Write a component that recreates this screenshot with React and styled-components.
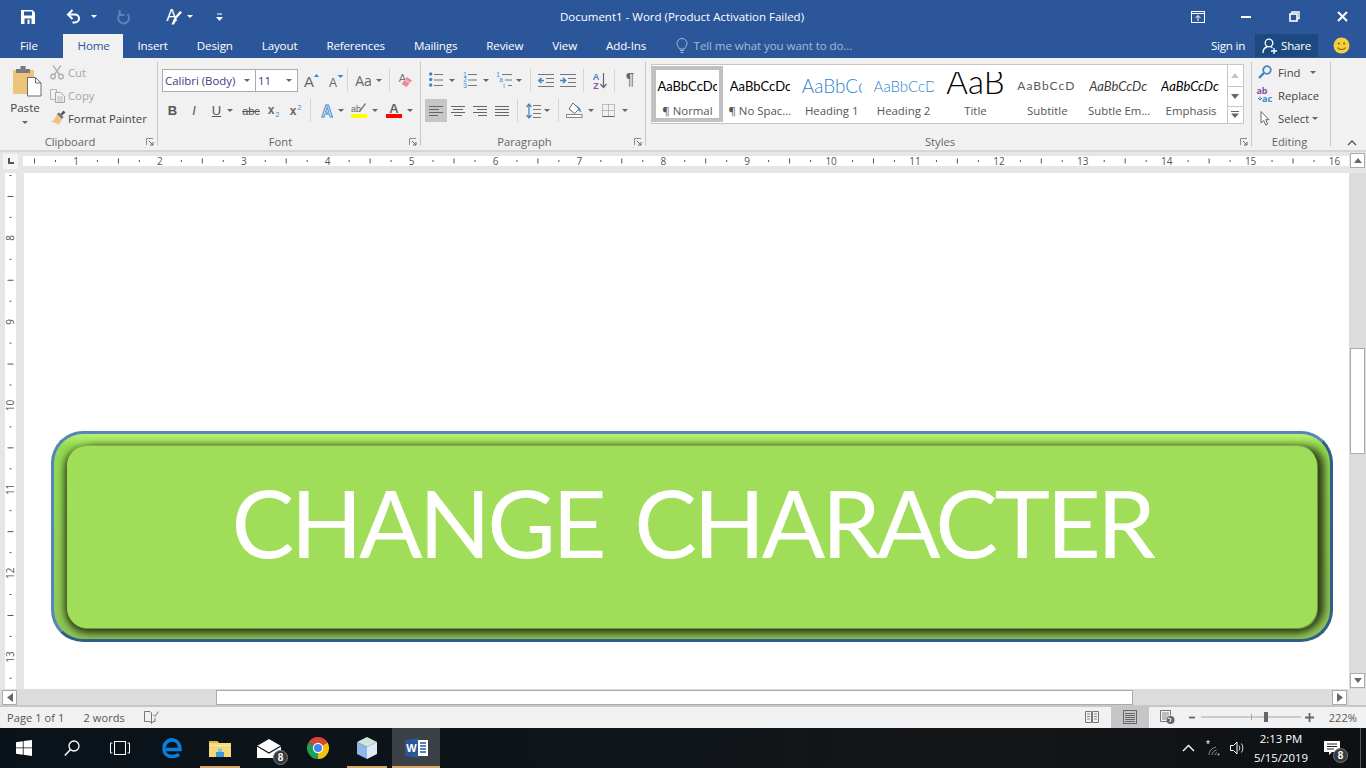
import React from "react";
import styled, { createGlobalStyle } from "styled-components";

const BLUE = "#2b579a";
const ICON = "#666";
const ACCENT = "#3f86c7";

const Global = createGlobalStyle`
  html, body { margin: 0; padding: 0; background: #fff; }
  body { font-family: "Open Sans", "Noto Sans", sans-serif; font-size: 11.5px; color: #444; }
`;

const Win = styled.div`
  width: 1366px;
  height: 768px;
  overflow: hidden;
  display: flex;
  flex-direction: column;
`;

/* title bar + tabs */
const TitleBar = styled.div`
  height: 34px;
  background: ${BLUE};
  color: #fff;
  display: grid;
  grid-template-columns: 1fr auto 1fr;
  align-items: center;
`;
const Quick = styled.div`display: flex; align-items: center; height: 100%;`;
const WinBtns = styled.div`display: flex; justify-content: flex-end; align-items: center; height: 100%;`;
const DocTitle = styled.div`font-size: 11.5px; color: #fff; margin-left: -2px;`;

const TabRow = styled.div`
  height: 24px;
  background: ${BLUE};
  display: flex;
  align-items: stretch;
  font-size: 11.6px;
  letter-spacing: -0.15px;
`;
const FileTab = styled.div`
  width: 63px;
  padding-left: 20px;
  box-sizing: border-box;
  color: #fff;
  line-height: 24px;
`;
const Tab = styled.div`
  padding: 0 14.5px;
  width: ${(p) => (p.$active ? "60px" : "auto")};
  box-sizing: border-box;
  text-align: center;
  line-height: 23px;
  color: ${(p) => (p.$active ? BLUE : "#fff")};
  background: ${(p) => (p.$active ? "#f1f1f1" : "transparent")};
`;
const TellMe = styled.div`
  margin-left: 15px;
  display: flex;
  align-items: center;
  gap: 6px;
  color: #a5b9d6;
  letter-spacing: -0.1px;
`;
const TabRight = styled.div`
  margin-left: auto;
  display: flex;
  align-items: center;
  color: #fff;
  letter-spacing: -0.25px;
`;
const ShareBtn = styled.div`
  width: 63px;
  height: 23px;
  margin: 0 15px 0 10px;
  background: #1c4a80;
  display: flex;
  align-items: center;
  justify-content: center;
  gap: 3px;
`;
const SmileySlot = styled.div`width: 18px; margin-right: 15px;`;

/* ribbon */
const Ribbon = styled.div`
  height: 88px;
  background: #f1f1f1;
  border-bottom: 2px solid #d6d6d6;
  padding-top: 4px;
  display: flex;
`;
const Group = styled.div`
  width: ${(p) => p.$w}px;
  height: 88px;
  display: flex;
  flex-direction: column;
  background: linear-gradient(#c6c6c6, #c6c6c6) right top / 1px 84px no-repeat;
`;
const GroupBody = styled.div`
  height: 72px;
  display: ${(p) => (p.$row ? "flex" : "block")};
`;
const GroupLabel = styled.div`
  height: 16px;
  display: flex;
  align-items: center;
  color: #666;
  font-size: 11.2px;
  line-height: 16px;
  padding-right: 4px;
  & > span { flex: 1; text-align: center; }
  & > svg { margin-left: 6px; }
`;
const Paste = styled.div`
  width: 50px;
  display: flex;
  flex-direction: column;
  align-items: center;
  padding-top: 4px;
  font-size: 11.6px;
  color: #444;
  & > svg:first-child { margin-left: 4px; }
`;
const PasteText = styled.div`margin-top: 2px; line-height: 18px; margin-bottom: 4px;`;
const Stack = styled.div`display: flex; flex-direction: column; margin-top: -1px;`;
const StackRow = styled.div`
  height: 23px;
  display: flex;
  align-items: center;
  color: ${(p) => (p.$off ? "#a6a6a6" : "#444")};
  font-size: 11.3px;
`;
const StackIcon = styled.div`
  width: ${(p) => p.$w || 18}px;
  display: flex;
  justify-content: ${(p) => (p.$w ? "center" : "flex-start")};
`;
const Rows = styled.div`
  padding-top: 7px;
  display: flex;
  flex-direction: column;
  gap: 7px;
`;
const Row = styled.div`
  height: ${(p) => p.$h || 23}px;
  display: flex;
  align-items: center;
  margin-left: ${(p) => p.$ml || 0}px;
`;
const Tool = styled.div`
  width: ${(p) => p.$w}px;
  height: 23px;
  flex: none;
  display: flex;
  align-items: center;
  justify-content: center;
  gap: ${(p) => p.$gap ?? 4}px;
  background: ${(p) => (p.$on ? "#c6c6c6" : "transparent")};
  margin-left: ${(p) => p.$ml || 0}px;
  color: ${ICON};
`;
const Sep = styled.div`
  width: 1px;
  height: 23px;
  flex: none;
  background: #d4d4d4;
  margin-left: ${(p) => p.$ml || 0}px;
  margin-right: ${(p) => p.$mr || 0}px;
`;
const Caret = styled.span`
  flex: none;
  width: 0;
  height: 0;
  border-left: 3.5px solid transparent;
  border-right: 3.5px solid transparent;
  border-top: 4px solid ${(p) => p.$c || "#666"};
`;
const SmallCaret = styled(Caret)`
  border-left-width: 3px;
  border-right-width: 3px;
  border-top-width: 3px;
  margin-left: ${(p) => p.$ml || 0}px;
`;
const Select = styled.div`
  width: ${(p) => p.$w}px;
  height: 23px;
  box-sizing: border-box;
  flex: none;
  background: #fff;
  border: 1px solid #ababab;
  margin-left: ${(p) => p.$ml || 0}px;
  padding: 0 5px 0 2px;
  display: flex;
  align-items: center;
  justify-content: space-between;
  font-size: 11.4px;
  color: #3b3b78;
`;
const Glyph = styled.span`
  font-family: ${(p) => p.$f || '"Liberation Sans"'}, sans-serif;
  font-size: ${(p) => p.$s || 13}px;
  font-weight: ${(p) => (p.$b ? 700 : 400)};
  font-style: ${(p) => (p.$i ? "italic" : "normal")};
  text-decoration: ${(p) => p.$d || "none"};
  color: ${(p) => p.$c || "#555"};
`;

/* style gallery */
const Gallery = styled.div`
  margin: 2px 0 0 5px;
  width: 593px;
  height: 60px;
  box-sizing: border-box;
  border: 1px solid #c6c6c6;
  background: #fff;
  display: flex;
  padding-top: 1px;
`;
const StyleCard = styled.div`
  height: 56px;
  box-sizing: border-box;
  border: 4px solid ${(p) => (p.$on ? "#c0c0c0" : "transparent")};
  margin-right: ${(p) => (p.$on ? "1px" : "0")};
  width: ${(p) => (p.$on ? "71px" : "72px")};
  display: flex;
  flex-direction: column;
  align-items: center;
`;
const Sample = styled.div`
  flex: none;
  width: 60px;
  height: ${(p) => 32 - (p.$top || 0)}px;
  margin-top: ${(p) => p.$top || 0}px;
  overflow: hidden;
  white-space: nowrap;
  font-family: Lato, "Open Sans", sans-serif;
  line-height: ${(p) => p.$lh || 32}px;
  font-size: ${(p) => p.$s || 13}px;
  color: ${(p) => p.$c || "#000"};
  font-style: ${(p) => (p.$i ? "italic" : "normal")};
  font-weight: ${(p) => p.$wt || 400};
  letter-spacing: ${(p) => p.$ls || 0}px;
  text-align: ${(p) => (p.$center ? "center" : "left")};
`;
const StyleName = styled.div`
  flex: none;
  font-size: 11.4px;
  line-height: 18px;
  color: #555;
  white-space: nowrap;
`;
const GalleryScroll = styled.div`
  width: 15px;
  margin: -1px 0 0 0;
  border-left: 1px solid #c6c6c6;
  display: grid;
  grid-template-rows: 21px 20px 17px;
`;
const GalleryBtn = styled.div`
  display: flex;
  flex-direction: column;
  gap: 2px;
  align-items: center;
  justify-content: center;
  border-top: ${(p) => (p.$line ? "1px solid #c6c6c6" : "none")};
`;
const Collapse = styled.div`
  flex: 1;
  display: flex;
  align-items: flex-end;
  justify-content: flex-end;
  padding: 0 9px 4px 0;
`;

/* ruler */
const RulerRow = styled.div`
  height: 21px;
  background: #e6e6e6;
  display: flex;
`;
const Corner = styled.div`
  width: 15px;
  height: 15px;
  margin: 2px 5px 0 3px;
  background: #f4f4f4;
  display: flex;
  align-items: center;
  justify-content: center;
`;
const RulerStrip = styled.div`
  width: 1326px;
  height: 10px;
  margin-top: 4px;
  background: #fff;
`;
const ArrowBtn = styled.div`
  width: ${(p) => p.$w || 15}px;
  height: ${(p) => p.$h || 15}px;
  box-sizing: border-box;
  flex: none;
  background: #fff;
  border: 1px solid #ababab;
  display: flex;
  align-items: center;
  justify-content: center;
`;
const TopArrow = styled(ArrowBtn)`margin: 1px 0 0 1px;`;

/* document */
const DocRow = styled.div`
  height: 516px;
  display: flex;
  background: #e6e6e6;
`;
const VRuler = styled.div`
  width: 24px;
  flex: none;
  box-sizing: border-box;
  padding-left: 5px;
`;
const VStrip = styled.div`width: 11px; height: 100%; background: #fff;`;
const Page = styled.div`
  width: 1325px;
  flex: none;
  background: #fff;
  box-sizing: border-box;
  padding: 258px 0 0 27px;
  overflow: hidden;
`;
const Bevel = styled.div`
  width: 1282px;
  height: 211px;
  box-sizing: border-box;
  border: 3px solid #5585bb;
  border-bottom-color: #2f5f88;
  border-right-color: #2f5f88;
  border-radius: 32px;
  padding: 12px 13px 11px 13px;
  background: linear-gradient(#bcf070 0, #93da53 12px, #8fc558 100%);
  overflow: hidden;
`;
const Face = styled.div`
  height: 100%;
  box-sizing: border-box;
  background: #a0de5a;
  border-radius: 20px;
  display: flex;
  align-items: center;
  justify-content: center;
  padding-bottom: 30px;
  box-shadow:
    0 -1px 0 #80b050,
    1px 1px 0 #6e9344,
    8px 0 8px -1px #2e3a14,
    0 6px 8px -1px #2e3a14,
    -5px 0 6px -2px #4f7028;
  color: #fff;
  font-family: Lato, "Open Sans", sans-serif;
  font-size: 94px;
  letter-spacing: -3.6px;
  word-spacing: 11px;
  white-space: nowrap;
`;
const VScroll = styled.div`
  flex: 1;
  background: #dcdcdc;
  display: flex;
  flex-direction: column;
  padding: 0 1px 1px 1px;
`;
const VThumb = styled.div`
  margin-top: 175px;
  width: 15px;
  height: 106px;
  box-sizing: border-box;
  background: #fff;
  border: 1px solid #ababab;
`;
const DownArrow = styled(ArrowBtn)`margin-top: auto;`;

const HScroll = styled.div`
  height: 18px;
  box-sizing: border-box;
  background: #dcdcdc;
  border-bottom: 2px solid #c6c6c6;
  display: flex;
  padding: 1px 0 0 2px;
`;
const HThumb = styled.div`
  width: 917px;
  height: 15px;
  margin-left: 199px;
  box-sizing: border-box;
  background: #fff;
  border: 1px solid #ababab;
`;
const HRight = styled(ArrowBtn)`margin-left: 199px;`;
const HEnd = styled.div`
  margin: -1px 0 0 2px;
  flex: 1;
  background: #e6e6e6;
`;

/* status bar */
const StatusBar = styled.div`
  height: 22px;
  background: #f1f1f1;
  display: flex;
  align-items: center;
  font-size: 11px;
  color: #555;
  letter-spacing: 0.1px;
`;
const StatusText = styled.span`margin-left: ${(p) => p.$ml}px;`;
const StatusRight = styled.div`
  margin-left: auto;
  display: flex;
  align-items: center;
  height: 100%;
`;
const ViewBtn = styled.div`
  width: ${(p) => p.$w}px;
  height: 100%;
  background: ${(p) => (p.$on ? "#c6c6c6" : "transparent")};
  display: flex;
  align-items: center;
  justify-content: center;
`;
const Zoomer = styled.div`
  display: flex;
  align-items: center;
  width: 126px;
  margin-left: 1px;
  color: #555;
  justify-content: space-between;
`;
const Percent = styled.span`margin: 0 9px 0 15px;`;

/* taskbar */
const Taskbar = styled.div`
  height: 40px;
  background: linear-gradient(90deg, #0a1319, #0c141a 30%, #141618 70%, #0e1114);
  display: flex;
  color: #fff;
`;
const TaskCell = styled.div`
  position: relative;
  width: ${(p) => p.$w || 48}px;
  margin-left: ${(p) => p.$ml || 0}px;
  flex: none;
  display: flex;
  align-items: center;
  justify-content: center;
  background:
    ${(p) => (p.$open ? `linear-gradient(#d9a566, #d9a566) center bottom / ${p.$active ? "100%" : "40px"} 2px no-repeat` : "none")},
    ${(p) => (p.$active ? "#3b4045" : "transparent")};
`;
const Badge = styled.span`
  position: absolute;
  right: ${(p) => p.$r}px;
  bottom: ${(p) => p.$b}px;
  width: 15px;
  height: 15px;
  box-sizing: border-box;
  border-radius: 50%;
  background: #3a3a3a;
  border: 1px solid #777;
  color: #fff;
  font-family: "Liberation Sans", sans-serif;
  font-size: 10px;
  font-weight: 700;
  line-height: 13px;
  text-align: center;
`;
const Tray = styled.div`
  margin-left: auto;
  display: flex;
  height: 100%;
`;
const Clock = styled.div`
  width: 60px;
  flex: none;
  display: flex;
  flex-direction: column;
  align-items: center;
  justify-content: center;
  gap: 1px;
  font-size: 11.4px;
  line-height: 18px;
  white-space: nowrap;
`;
const ShowDesktop = styled.div`
  width: 5px;
  margin-left: 7px;
  border-left: 1px solid #555;
`;

/* icons */
const Svg = ({ w, h = w, children }) => (
  <svg width={w} height={h} viewBox={`0 0 ${w} ${h}`} style={{ display: "block", flex: "none", overflow: "visible" }}>{children}</svg>
);
const T = ({ x, y, s = 13, c = "#666", w = 400, i, f = "Liberation Sans", a = "middle", children }) => (
  <text x={x} y={y} fontFamily={f} fontSize={s} fill={c} fontWeight={w} fontStyle={i ? "italic" : "normal"} textAnchor={a}>{children}</text>
);

const SaveIcon = () => (
  <Svg w={14}>
    <path d="M0 0h11.5L14 2.5V14H0z" fill="#fff" />
    <rect x="3" y="1.5" width="8" height="4" fill={BLUE} />
    <rect x="3.5" y="8.5" width="7" height="5.5" fill={BLUE} />
    <rect x="6.5" y="9.5" width="2" height="4.5" fill="#fff" />
  </Svg>
);
const UndoIcon = () => (
  <Svg w={15}>
    <path d="M2.5 5.5h6.5a4 4 0 0 1 0 8H6.5" fill="none" stroke="#fff" strokeWidth="2" />
    <path d="M6.5 1L2 5.5L6.5 10" fill="none" stroke="#fff" strokeWidth="2" />
  </Svg>
);
const RedoIcon = () => (
  <Svg w={14}>
    <path d="M10.5 3.5A5.5 5.5 0 1 1 4 2.6" fill="none" stroke="#5f82b8" strokeWidth="2" transform="translate(0 .5)" />
    <path d="M3.5 0v5h5" fill="none" stroke="#5f82b8" strokeWidth="2" transform="translate(-1 0)" />
  </Svg>
);
const StyleSetIcon = () => (
  <Svg w={18} h={17}>
    <T x={6.5} y={13} s={16} c="#fff">A</T>
    <path d="M17 4.5L11 11l-2-1 6-7z" fill="#fff" />
    <path d="M9 10.5l2.5 1.5L9 16.5H6.5z" fill="#fff" />
  </Svg>
);
const CustomizeIcon = () => (
  <Svg w={7} h={8}>
    <path d="M1 .5h5v1H1z" fill="#fff" />
    <path d="M0 4h7L3.5 8z" fill="#fff" />
  </Svg>
);
const RibbonDisplay = () => (
  <Svg w={14} h={12}>
    <rect x=".5" y=".5" width="13" height="11" fill="none" stroke="#fff" />
    <path d="M1 2.5h12" stroke="#fff" />
    <path d="M7 10V4.5M4.5 7L7 4.5 9.5 7" fill="none" stroke="#fff" />
  </Svg>
);
const MinIcon = () => <Svg w={10} h={10}><rect y="4" width="10" height="2" fill="#fff" /></Svg>;
const RestoreIcon = () => (
  <Svg w={11} h={11}>
    <path d="M3 2.5V1h7v6.5H8" fill="none" stroke="#fff" strokeWidth="1.4" />
    <rect x="1" y="3" width="7" height="7" fill="none" stroke="#fff" strokeWidth="1.6" />
  </Svg>
);
const CloseIcon = () => (
  <Svg w={11}><path d="M1 1l9 9M10 1l-9 9" stroke="#fff" strokeWidth="2" /></Svg>
);
const BulbIcon = () => (
  <Svg w={12} h={16}>
    <path d="M3.5 11C3 9 1 8 1 5.5a5 5 0 0 1 10 0C11 8 9 9 8.5 11z" fill="none" stroke="#a5b9d6" />
    <path d="M4 12.5h4M4.5 14.5h3" stroke="#a5b9d6" />
  </Svg>
);
const ShareIcon = () => (
  <Svg w={16}>
    <circle cx="7" cy="5" r="3.8" fill="none" stroke="#fff" strokeWidth="1.3" />
    <path d="M1 15c0-3.5 2-5.5 4-6M9 9l1.5 1" fill="none" stroke="#fff" strokeWidth="1.3" />
    <path d="M12 10v6M9 13h6" stroke="#fff" strokeWidth="1.3" />
  </Svg>
);
const Smiley = () => (
  <Svg w={17}>
    <circle cx="8.5" cy="8.5" r="8" fill="#f4d03f" />
    <circle cx="5.8" cy="6.5" r="1.1" fill="#7a6410" />
    <circle cx="11.2" cy="6.5" r="1.1" fill="#7a6410" />
    <path d="M4.5 10.5c1.5 2.7 6.5 2.7 8 0" fill="none" stroke="#7a6410" strokeWidth="1.1" />
  </Svg>
);
const PasteIcon = () => (
  <Svg w={29} h={31}>
    <rect x="0" y="4" width="21" height="24" fill="#edc47c" />
    <rect x="3" y="3" width="14" height="4" fill="#7b7b7b" />
    <rect x="7.5" y="0" width="5" height="4" fill="#7b7b7b" />
    <path d="M14.5 11.5h8l5.5 5.5v13H14.5z" fill="#fff" stroke="#6c6c6c" />
    <path d="M22.5 11.5v5.5H28" fill="none" stroke="#6c6c6c" />
  </Svg>
);
const CutIcon = () => (
  <Svg w={14}>
    <path d="M3 .5l6.5 9M11 .5L4.5 9.5" stroke="#b0b0b0" strokeWidth="1.3" fill="none" />
    <circle cx="3" cy="11.5" r="2.3" fill="none" stroke="#a6a6a6" strokeWidth="1.2" />
    <circle cx="11" cy="11.5" r="2.3" fill="none" stroke="#a6a6a6" strokeWidth="1.2" />
  </Svg>
);
const CopyIcon = () => (
  <Svg w={15}>
    <path d="M.5 1.5h6v10h-6z" fill="#f1f1f1" stroke="#b4b4b4" />
    <path d="M5.5 4.5h5l4 3.5v6.5h-9z" fill="#f1f1f1" stroke="#a6a6a6" />
    <path d="M7 9h6M7 11h6M7 13h6" stroke="#bcbcbc" />
  </Svg>
);
const PainterIcon = () => (
  <Svg w={16}>
    <path d="M7 4l5 5-3 5.5L1 11.5C3 11 5 9 7 4z" fill="#eec383" />
    <path d="M7 4l2-1.5 4.5 4.5L12 9z" fill="#6e6e6e" />
    <path d="M10.5 4l3-3.5 2 2-3.5 3z" fill="#555" />
  </Svg>
);
const Launcher = () => (
  <Svg w={8}>
    <path d="M.5 7V.5H7" fill="none" stroke="#8d8d8d" />
    <path d="M3 3l4 4M7 4v3H4" fill="none" stroke="#666" />
  </Svg>
);
const GrowIcon = ({ down }) => (
  <Svg w={16} h={16}>
    <T x={6} y={15} s={down ? 12 : 15} c="#666">A</T>
    <path d={down ? "M10.5 3h6l-3 3z" : "M11 5h5l-2.5-3z"} fill={ACCENT} />
  </Svg>
);
const Eraser = () => (
  <Svg w={16}>
    <T x={5.5} y={10} s={11} c="#777">A</T>
    <path d="M10 5l5 3.5-5.5 6.5-5-3z" fill="#ea8a9b" />
    <path d="M8 8l5 3" stroke="#fff" strokeWidth=".7" />
  </Svg>
);
const ListIcon = ({ w = 14, kind = "bullet" }) => {
  const ys = [2, 7.5, 13];
  return (
    <Svg w={w} h={16}>
      {ys.map((y, i) => (
        <g key={y}>
          {kind === "bullet" && <circle cx="1.7" cy={y} r="1.7" fill={ACCENT} />}
          {kind === "num" && <T x={2} y={y + 2.5} s={6.5} c={ACCENT}>{i + 1}</T>}
          {kind === "multi" && <T x={2 + i * 3} y={y + 2.5} s={6.5} c={ACCENT}>{["1", "a", "i"][i]}</T>}
          <path d={`M${kind === "multi" ? 6 + i * 3 : 5} ${y + 0.5}H${w}`} stroke="#777" />
        </g>
      ))}
    </Svg>
  );
};
const IndentIcon = ({ out }) => (
  <Svg w={16} h={15}>
    <path d="M0 1.5h16M8 5.5h8M8 9.5h8M0 13.5h16" stroke="#777" />
    <path d={out ? "M6 7.5H1M3.5 5L1 7.5 3.5 10" : "M0 7.5h5M3 5l2.5 2.5L3 10"} fill="none" stroke={ACCENT} strokeWidth="1.7" />
  </Svg>
);
const SortIcon = () => (
  <Svg w={15} h={17}>
    <T x={4} y={8} s={9} c={ACCENT} w={700}>A</T>
    <T x={4} y={17} s={9} c="#8a4fb0" w={700}>Z</T>
    <path d="M11.5 1v14M8.5 12l3 3.5 3-3.5" fill="none" stroke="#666" strokeWidth="1.2" />
  </Svg>
);
const AlignIcon = ({ kind }) => {
  const lines = {
    left: [[0, 14], [0, 10], [0, 14], [0, 9]],
    center: [[0, 14], [2, 12], [0, 14], [3, 11]],
    right: [[0, 14], [4, 14], [0, 14], [5, 14]],
    justify: [[0, 14], [0, 14], [0, 14], [0, 14]],
  }[kind];
  return (
    <Svg w={14} h={12}>
      {lines.map(([a, b], i) => <path key={i} d={`M${a} ${1.5 + i * 3}H${b}`} stroke="#666" />)}
    </Svg>
  );
};
const SpacingIcon = () => (
  <Svg w={15} h={16}>
    <path d="M3 1v14M.5 4L3 1l2.5 3M.5 12L3 15l2.5-3" fill="none" stroke={ACCENT} strokeWidth="1.3" />
    <path d="M7 2.5h8M7 6.5h8M7 10.5h8M7 14.5h8" stroke="#777" />
  </Svg>
);
const ShadingIcon = () => (
  <Svg w={17}>
    <path d="M7 1l6 6-4.5 4.5L3 7z" fill="#fff" stroke="#666" />
    <path d="M10 3l4 3.5 1.5 4-3-2z" fill={ACCENT} />
    <rect x=".5" y="12.5" width="15.5" height="3" fill="#fff" stroke="#888" />
  </Svg>
);
const BorderIcon = () => (
  <Svg w={13}>
    <path d="M.5.5h12v12H.5zM6.5.5v12M.5 6.5h12" fill="none" stroke="#8a8a8a" strokeDasharray="1 1" />
    <path d="M.5 12.5h12" stroke="#666" />
  </Svg>
);
const FindIcon = () => (
  <Svg w={14}>
    <circle cx="9" cy="5" r="3.8" fill="none" stroke={ACCENT} strokeWidth="1.8" />
    <path d="M6 8l-5 5" stroke={ACCENT} strokeWidth="2.4" />
  </Svg>
);
const ReplaceIcon = () => (
  <Svg w={16} h={16}>
    <T x={5} y={7} s={9} c="#8a4fb0" w={700} f="Open Sans">ab</T>
    <T x={10} y={15} s={9} c={ACCENT} w={700} f="Open Sans">ac</T>
    <path d="M3 9.5v3M1 11l2 2 2-2" fill="none" stroke={ACCENT} />
  </Svg>
);
const SelectIcon = () => (
  <Svg w={10} h={15}>
    <path d="M1 .5V12l2.7-2.5 2 4.5 2-1-2-4.3H9z" fill="#fff" stroke="#666" />
  </Svg>
);
const Tri = ({ dir = "up", c = "#666" }) => {
  const d = { up: "M0 5L4 0l4 5z", down: "M0 0l4 5 4-5z" }[dir];
  return <Svg w={8} h={5}><path d={d} fill={c} /></Svg>;
};
const SideTri = ({ left }) => (
  <Svg w={6} h={9}><path d={left ? "M6 0L0 4.5 6 9z" : "M0 0l6 4.5L0 9z"} fill="#666" /></Svg>
);
const Chevron = () => (
  <Svg w={10} h={6}><path d="M1 5l4-4 4 4" fill="none" stroke="#555" strokeWidth="1.4" /></Svg>
);
const CornerMark = () => (
  <Svg w={6}><path d="M0 0h2v4h4v2H0z" fill="#555" /></Svg>
);

const hMarks = [];
for (let i = 0; i < 64; i++) hMarks.push(11 + i * 20.975);
const HRulerMarks = () => (
  <Svg w={1326} h={10}>
    {hMarks.map((x, i) => {
      if (i % 4 === 2) return null;
      if (i % 2 === 1) return <rect key={i} x={x} y="4" width="1" height="2" fill="#555" />;
      return <rect key={i} x={x} y="2.5" width="1" height="5" fill="#555" />;
    })}
    {Array.from({ length: 16 }, (_, k) => (
      <T key={k} x={53 + k * 83.9} y={9} s={10} c="#555" f="Open Sans">{k + 1}</T>
    ))}
  </Svg>
);
const VRulerMarks = () => (
  <Svg w={11} h={516}>
    {Array.from({ length: 25 }, (_, i) => {
      const y = 2 + i * 20.95;
      if (i % 4 === 3) return null;
      if (i % 2 === 1) return <rect key={i} x="2.5" y={y} width="6" height="1" fill="#555" />;
      return <rect key={i} x="4.5" y={y} width="2" height="1" fill="#555" />;
    })}
    {[8, 9, 10, 11, 12, 13].map((n, k) => (
      <g key={n} transform={`translate(9 ${65 + k * 83.8}) rotate(-90)`}>
        <T x={0} y={0} s={10} c="#555" f="Open Sans">{n}</T>
      </g>
    ))}
  </Svg>
);

const BookIcon = () => (
  <Svg w={14} h={14}>
    <path d="M.5 1.5h6v11h-6zM7.5 1.5h6v11h-6z" fill="none" stroke="#777" />
    <path d="M2 4h3M2 6.5h3M2 9h3M9 4h3M9 6.5h3M9 9h3" stroke="#888" />
  </Svg>
);
const ProofIcon = () => (
  <Svg w={15} h={15}>
    <path d="M7.5 3L6 1.5H.5v10H6l1.5 2 1.5-2h2V8M7.5 3v10" fill="none" stroke="#777" />
    <path d="M9 4.5l2 2 3.5-5" fill="none" stroke="#777" />
  </Svg>
);
const PrintIcon = () => (
  <Svg w={14} h={14}>
    <rect x=".5" y=".5" width="13" height="13" fill="none" stroke="#666" />
    <path d="M2 3.5h10M2 5.5h10M2 7.5h10M2 9.5h10M2 11.5h10" stroke="#666" />
  </Svg>
);
const WebIcon = () => (
  <Svg w={15} h={14}>
    <path d="M8 11.5H.5V.5h10v5" fill="none" stroke="#777" />
    <path d="M2 3h7M2 5h7M2 7h5M2 9h4" stroke="#888" />
    <circle cx="10.5" cy="10" r="4" fill="#666" />
    <path d="M8 8l3 1-1 3" stroke="#fff" fill="none" />
  </Svg>
);
const SliderIcon = () => (
  <Svg w={100} h={12}>
    <path d="M0 6h100" stroke="#a6a6a6" />
    <path d="M50.5 3v6" stroke="#a6a6a6" />
    <rect x="63" y="1" width="4" height="10" fill="#666" />
  </Svg>
);
const ZoomSign = ({ plus }) => (
  <Svg w={9} h={9}>
    <path d={plus ? "M0 4.5h9M4.5 0v9" : "M1 4.5h6"} stroke="#666" strokeWidth="1.8" />
  </Svg>
);

const WinLogo = () => (
  <Svg w={16}>
    <path d="M0 2.2L6.8 1.2V7.5H0zM7.6 1.1L16 0v7.5H7.6zM0 8.3h6.800v6.500L0 13.800zM7.6 8.3H16V16l-8.400-1.200z" fill="#fff" />
  </Svg>
);
const SearchIcon = () => (
  <Svg w={16}>
    <circle cx="10" cy="6" r="5" fill="none" stroke="#fff" strokeWidth="1.3" />
    <path d="M6.5 9.5L.8 15.5" stroke="#fff" strokeWidth="1.5" />
  </Svg>
);
const TaskViewIcon = () => (
  <Svg w={20} h={14}>
    <rect x="4.5" y=".5" width="11" height="13" fill="none" stroke="#fff" />
    <path d="M2.5 2H.5v10h2M17.5 2h2v10h-2" fill="none" stroke="#fff" />
  </Svg>
);
const EdgeLogo = () => (
  <Svg w={20}>
    <path d="M4 11.5h14C18 5.5 14.5 2 10 2 5.5 2 2 6 2 11c0 4.5 3.500 7.500 8 7.500 2.500 0 5-.7 7-2" fill="none" stroke="#0a7fdc" strokeWidth="3.5" />
    <path d="M1 8C3 3 7 1 11 1" fill="none" stroke="#0a7fdc" strokeWidth="2" />
  </Svg>
);
const ExplorerIcon = () => (
  <Svg w={22} h={18}>
    <path d="M0 2h8l2 2h12v14H0z" fill="#f5d77c" />
    <path d="M0 2h8l2 2H0z" fill="#e3b64c" />
    <path d="M1 6h20v1H1z" fill="#fbe9ae" />
    <path d="M7 13h8v5H7z" fill="#3b9ad8" />
    <path d="M9 9.5h4V13H9z" fill="#7cc4ee" />
  </Svg>
);
const MailIcon = () => (
  <Svg w={24} h={19}>
    <path d="M0 7L12 0l12 7v12H0z" fill="#fff" />
    <path d="M0 7l12 7 12-7" fill="none" stroke="#0c141a" strokeWidth="1.2" />
  </Svg>
);
const ChromeLogo = () => (
  <Svg w={22}>
    <path d="M11 11L1.47 5.5A11 11 0 0 1 20.53 5.5Z" fill="#dc4437" />
    <path d="M11 11L20.53 5.5A11 11 0 0 1 11 22Z" fill="#f4c20d" />
    <path d="M11 11L11 22A11 11 0 0 1 1.47 5.5Z" fill="#1f9e55" />
    <circle cx="11" cy="11" r="5.2" fill="#fff" />
    <circle cx="11" cy="11" r="4" fill="#4285f4" />
  </Svg>
);
const CubeIcon = () => (
  <Svg w={22} h={24}>
    <path d="M11 1l10 5-10 5L1 6z" fill="#cfe7d8" />
    <path d="M1 6l10 5v12L1 18z" fill="#8eb6e6" />
    <path d="M21 6l-10 5v12l10-5z" fill="#dfeaf7" />
  </Svg>
);
const WordLogo = () => (
  <Svg w={23} h={20}>
    <rect x="7" y="2" width="16" height="16" fill="#fff" />
    <path d="M15 5h6M15 8h6M15 11h6M15 14h6" stroke="#2b579a" strokeWidth="1.3" />
    <path d="M0 2L13 0v20L0 18z" fill="#2b579a" />
    <T x={6.5} y={14} s={11} c="#fff" w={700}>W</T>
  </Svg>
);
const TrayCaret = () => (
  <Svg w={13} h={8}><path d="M1 7l5.5-5.5L12 7" fill="none" stroke="#fff" strokeWidth="1.3" /></Svg>
);
const WifiIcon = () => (
  <Svg w={16} h={16}>
    <T x={3} y={8} s={10} c="#fff">*</T>
    <path d="M4 15c0-4 3-7 7-8M7 15c0-2.5 2-4.5 4.5-5M10 15c0-1 .6-2 2-2.3" fill="none" stroke="#8b9095" />
    <circle cx="13.5" cy="14.5" r="1" fill="#c0c0c0" />
  </Svg>
);
const SpeakerIcon = () => (
  <Svg w={16} h={14}>
    <path d="M.5 4.5h3L7 1v12L3.5 9.5h-3z" fill="none" stroke="#fff" />
    <path d="M9 4.5c1 1.5 1 3.5 0 5M11.5 2.5c1.8 3 1.8 6 0 9" fill="none" stroke="#ddd" />
  </Svg>
);
const NotifIcon = () => (
  <Svg w={16} h={14}>
    <path d="M0 0h16v11H8l-3 3v-3H0z" fill="#fff" />
    <path d="M3 3h10M3 5.5h10M3 8h7" stroke="#222" />
  </Svg>
);

const SAMPLES = [
  { name: "¶ Normal", text: "AaBbCcDc", on: true },
  { name: "¶ No Spac...", text: "AaBbCcDc" },
  { name: "Heading 1", text: "AaBbCc", s: 19, c: "#2e84d0", wt: 300 },
  { name: "Heading 2", text: "AaBbCcD", s: 15, c: "#2e84d0", wt: 300 },
  { name: "Title", text: "AaB", s: 33, wt: 300, center: true, top: 2, lh: 19 },
  { name: "Subtitle", text: "AaBbCcD", c: "#5a5a5a", ls: 1, s: 12 },
  { name: "Subtle Em...", text: "AaBbCcDc", c: "#404040", i: true },
  { name: "Emphasis", text: "AaBbCcDc", i: true },
];

export default function App() {
  return (
    <>
      <Global />
      <Win>
        <TitleBar>
          <Quick>
            <Tool $w={14} $ml={21}><SaveIcon /></Tool>
            <Tool $w={31} $ml={31} $gap={10}><UndoIcon /><SmallCaret $c="#fff" /></Tool>
            <Tool $w={14} $ml={20}><RedoIcon /></Tool>
            <Tool $w={28} $ml={34} $gap={4}><StyleSetIcon /><SmallCaret $c="#fff" /></Tool>
            <Tool $w={7} $ml={23}><CustomizeIcon /></Tool>
          </Quick>
          <DocTitle>Document1 - Word (Product Activation Failed)</DocTitle>
          <WinBtns>
            <Tool $w={48}><RibbonDisplay /></Tool>
            <Tool $w={48}><MinIcon /></Tool>
            <Tool $w={48}><RestoreIcon /></Tool>
            <Tool $w={48}><CloseIcon /></Tool>
          </WinBtns>
        </TitleBar>

        <TabRow>
          <FileTab>File</FileTab>
          <Tab $active>Home</Tab>
          <Tab>Insert</Tab>
          <Tab>Design</Tab>
          <Tab>Layout</Tab>
          <Tab>References</Tab>
          <Tab>Mailings</Tab>
          <Tab>Review</Tab>
          <Tab>View</Tab>
          <Tab>Add-Ins</Tab>
          <TellMe><BulbIcon />Tell me what you want to do...</TellMe>
          <TabRight>
            Sign in
            <ShareBtn><ShareIcon />Share</ShareBtn>
            <SmileySlot><Smiley /></SmileySlot>
          </TabRight>
        </TabRow>

        <Ribbon>
          <Group $w={158}>
            <GroupBody $row>
              <Paste>
                <PasteIcon />
                <PasteText>Paste</PasteText>
                <SmallCaret />
              </Paste>
              <Stack>
                <StackRow $off><StackIcon><CutIcon /></StackIcon>Cut</StackRow>
                <StackRow $off><StackIcon><CopyIcon /></StackIcon>Copy</StackRow>
                <StackRow><StackIcon><PainterIcon /></StackIcon>Format Painter</StackRow>
              </Stack>
            </GroupBody>
            <GroupLabel><span>Clipboard</span><Launcher /></GroupLabel>
          </Group>

          <Group $w={263}>
            <GroupBody>
              <Rows>
                <Row $ml={4}>
                  <Select $w={94}>Calibri (Body)<SmallCaret /></Select>
                  <Select $w={43} $ml={-1}>11<SmallCaret /></Select>
                  <Tool $w={26}><GrowIcon /></Tool>
                  <Tool $w={21}><GrowIcon down /></Tool>
                  <Sep $ml={2} />
                  <Tool $w={41} $gap={4}><Glyph $s={14} $f='"Open Sans"' $c="#666">Aa</Glyph><SmallCaret /></Tool>
                  <Sep />
                  <Tool $w={30}><Eraser /></Tool>
                </Row>
                <Row $ml={4} $h={24}>
                  <Tool $w={21}><Glyph $b>B</Glyph></Tool>
                  <Tool $w={22}><Glyph $i>I</Glyph></Tool>
                  <Tool $w={35} $gap={6}><Glyph $d="underline">U</Glyph><SmallCaret /></Tool>
                  <Tool $w={22}><Glyph $s={11} $d="line-through">abc</Glyph></Tool>
                  <Tool $w={22}><Svg w={14} h={13}><T x={5} y={10} s={12} w={700}>x</T><T x={11.5} y={13} s={7} c={ACCENT}>2</T></Svg></Tool>
                  <Tool $w={22}><Svg w={14} h={13}><T x={5} y={11} s={12} w={700}>x</T><T x={11.5} y={6} s={7} c={ACCENT}>2</T></Svg></Tool>
                  <Sep $ml={4} />
                  <Tool $w={37} $ml={2}><Svg w={14}><text x="7" y="13" fontFamily="Liberation Sans" fontSize="16" fontWeight="700" textAnchor="middle" fill="#cfe2f6" stroke={ACCENT} strokeWidth=".8">A</text></Svg><SmallCaret /></Tool>
                  <Tool $w={29} $gap={5}><Svg w={16} h={15}><T x={5} y={9} s={9} c="#666">ab</T><path d="M15 1l-6 8-1-1 6-8z" fill="#777" /><rect y="11" width="16" height="4" fill="#ffff00" /></Svg><SmallCaret /></Tool>
                  <Tool $w={40} $gap={5}><Svg w={16} h={15}><T x={8} y={10} s={13} c="#666" w={700}>A</T><rect y="11" width="16" height="4" fill="#ff0000" /></Svg><SmallCaret /></Tool>
                </Row>
              </Rows>
            </GroupBody>
            <GroupLabel><span>Font</span><Launcher /></GroupLabel>
          </Group>

          <Group $w={225}>
            <GroupBody>
              <Rows>
                <Row $ml={3}>
                  <Tool $w={36} $gap={6}><ListIcon /><SmallCaret /></Tool>
                  <Tool $w={32} $gap={6}><ListIcon kind="num" /><SmallCaret /></Tool>
                  <Tool $w={34} $gap={4}><ListIcon kind="multi" w={16} /><SmallCaret /></Tool>
                  <Sep $ml={4} />
                  <Tool $w={24} $ml={3}><IndentIcon out /></Tool>
                  <Tool $w={20}><IndentIcon /></Tool>
                  <Sep $ml={5} />
                  <Tool $w={30}><SortIcon /></Tool>
                  <Sep />
                  <Tool $w={30}><Glyph $s={16} $c="#666">¶</Glyph></Tool>
                </Row>
                <Row $ml={4} $h={24}>
                  <Tool $w={22} $on><AlignIcon kind="left" /></Tool>
                  <Tool $w={22}><AlignIcon kind="center" /></Tool>
                  <Tool $w={22}><AlignIcon kind="right" /></Tool>
                  <Tool $w={22}><AlignIcon kind="justify" /></Tool>
                  <Sep $ml={4} />
                  <Tool $w={40} $gap={3}><SpacingIcon /><SmallCaret /></Tool>
                  <Sep />
                  <Tool $w={41} $gap={5}><ShadingIcon /><SmallCaret /></Tool>
                  <Tool $w={29} $gap={7}><BorderIcon /><SmallCaret /></Tool>
                </Row>
              </Rows>
            </GroupBody>
            <GroupLabel><span>Paragraph</span><Launcher /></GroupLabel>
          </Group>

          <Group $w={606}>
            <GroupBody>
              <Gallery>
                {SAMPLES.map((st) => (
                  <StyleCard key={st.name} $on={st.on}>
                    <Sample $s={st.s} $c={st.c} $i={st.i} $wt={st.wt} $ls={st.ls} $center={st.center} $top={st.top} $lh={st.lh}>{st.text}</Sample>
                    <StyleName>{st.name}</StyleName>
                  </StyleCard>
                ))}
                <GalleryScroll>
                  <GalleryBtn><Tri c="#c6c6c6" /></GalleryBtn>
                  <GalleryBtn $line><Tri dir="down" /></GalleryBtn>
                  <GalleryBtn $line><Svg w={8} h={7}><path d="M0 0h8v1H0zM0 2.5h8L4 7z" fill="#666" /></Svg></GalleryBtn>
                </GalleryScroll>
              </Gallery>
            </GroupBody>
            <GroupLabel><span>Styles</span><Launcher /></GroupLabel>
          </Group>

          <Group $w={79}>
            <GroupBody>
              <Stack>
                <StackRow><StackIcon $w={26}><FindIcon /></StackIcon>Find<SmallCaret $ml={9} /></StackRow>
                <StackRow><StackIcon $w={26}><ReplaceIcon /></StackIcon>Replace</StackRow>
                <StackRow><StackIcon $w={26}><SelectIcon /></StackIcon>Select<SmallCaret $ml={3} /></StackRow>
              </Stack>
            </GroupBody>
            <GroupLabel><span>Editing</span></GroupLabel>
          </Group>

          <Collapse><Chevron /></Collapse>
        </Ribbon>

        <RulerRow>
          <Corner><CornerMark /></Corner>
          <RulerStrip><HRulerMarks /></RulerStrip>
          <TopArrow><Tri /></TopArrow>
        </RulerRow>

        <DocRow>
          <VRuler><VStrip><VRulerMarks /></VStrip></VRuler>
          <Page>
            <Bevel>
              <Face>CHANGE CHARACTER</Face>
            </Bevel>
          </Page>
          <VScroll>
            <VThumb />
            <DownArrow><Tri dir="down" /></DownArrow>
          </VScroll>
        </DocRow>

        <HScroll>
          <ArrowBtn><SideTri left /></ArrowBtn>
          <HThumb />
          <HRight><SideTri /></HRight>
          <HEnd />
        </HScroll>

        <StatusBar>
          <StatusText $ml={7}>Page 1 of 1</StatusText>
          <StatusText $ml={19}>2 words</StatusText>
          <StatusText $ml={19}><ProofIcon /></StatusText>
          <StatusRight>
            <ViewBtn $w={37}><BookIcon /></ViewBtn>
            <ViewBtn $w={38} $on><PrintIcon /></ViewBtn>
            <ViewBtn $w={38}><WebIcon /></ViewBtn>
            <Zoomer>
              <ZoomSign />
              <SliderIcon />
              <ZoomSign plus />
            </Zoomer>
            <Percent>222%</Percent>
          </StatusRight>
        </StatusBar>

        <Taskbar>
          <TaskCell><WinLogo /></TaskCell>
          <TaskCell><SearchIcon /></TaskCell>
          <TaskCell><TaskViewIcon /></TaskCell>
          <TaskCell $ml={4}><EdgeLogo /></TaskCell>
          <TaskCell $open><ExplorerIcon /></TaskCell>
          <TaskCell $w={49}><MailIcon /><Badge $r={5} $b={3}>8</Badge></TaskCell>
          <TaskCell $w={49}><ChromeLogo /></TaskCell>
          <TaskCell $w={50} $open><CubeIcon /></TaskCell>
          <TaskCell $open $active><WordLogo /></TaskCell>
          <Tray>
            <TaskCell $w={26}><TrayCaret /></TaskCell>
            <TaskCell $w={24}><WifiIcon /></TaskCell>
            <TaskCell $w={26}><SpeakerIcon /></TaskCell>
            <Clock><span>2:13 PM</span><span>5/15/2019</span></Clock>
            <TaskCell $w={42}><NotifIcon /><Badge $r={5} $b={5}>8</Badge></TaskCell>
            <ShowDesktop />
          </Tray>
        </Taskbar>
      </Win>
    </>
  );
}
